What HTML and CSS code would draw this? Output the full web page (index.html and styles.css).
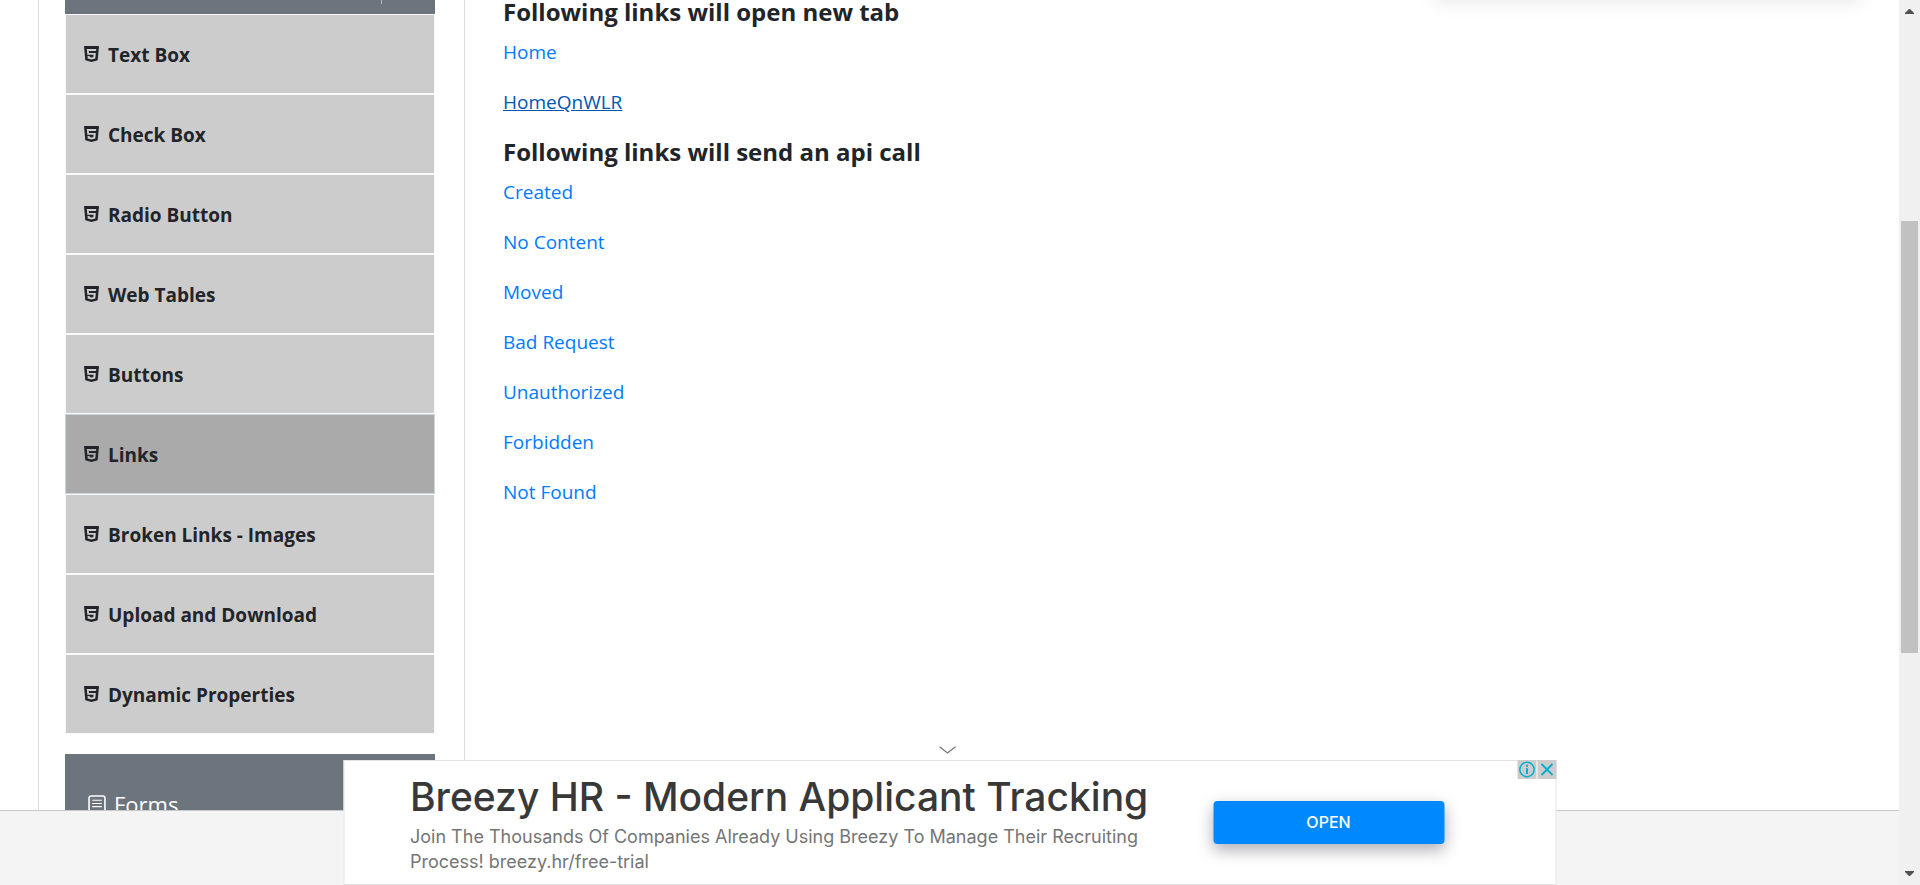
FILE: index.html
```html
<!DOCTYPE html>
<html lang="en">
<head>
<meta charset="utf-8">
<title>Links</title>
<link rel="stylesheet" href="styles.css">
</head>
<body>
<svg class="defs" aria-hidden="true">
  <symbol id="html5" viewBox="0 0 15 16" preserveAspectRatio="none">
    <path fill-rule="evenodd" d="M0 0h15l-1.300 14.200L7.500 16l-6.200-1.800zM12.200 3H2.800l.5 5.700h6.200l-.2 2.300-1.800.5-1.800-.5-.1-1H3.500l.2 2.500 3.800 1.100 3.800-1.100.5-5.600H5l-.2-2h7.200z"/>
  </symbol>
</svg>
<div class="page">
  <main class="layout">
    <nav class="sidebar">
      <div class="group-head group-head-open"><span class="divider"></span></div>
      <ul class="menu">
        <li class="menu-item"><svg class="menu-icon"><use href="#html5"/></svg><span>Text Box</span></li>
        <li class="menu-item"><svg class="menu-icon"><use href="#html5"/></svg><span>Check Box</span></li>
        <li class="menu-item"><svg class="menu-icon"><use href="#html5"/></svg><span>Radio Button</span></li>
        <li class="menu-item"><svg class="menu-icon"><use href="#html5"/></svg><span>Web Tables</span></li>
        <li class="menu-item"><svg class="menu-icon"><use href="#html5"/></svg><span>Buttons</span></li>
        <li class="menu-item active"><svg class="menu-icon"><use href="#html5"/></svg><span>Links</span></li>
        <li class="menu-item"><svg class="menu-icon"><use href="#html5"/></svg><span>Broken Links - Images</span></li>
        <li class="menu-item"><svg class="menu-icon"><use href="#html5"/></svg><span>Upload and Download</span></li>
        <li class="menu-item"><svg class="menu-icon"><use href="#html5"/></svg><span>Dynamic Properties</span></li>
      </ul>
      <div class="group-head group-head-forms">
        <svg class="forms-icon" viewBox="0 0 17 17"><rect x="1" y="1" width="15" height="15" rx="2"/><path d="M4 5h9M4 8h9M4 11h9"/></svg>
        <span>Forms</span>
      </div>
    </nav>
    <section class="content">
      <h5>Following links will open new tab</h5>
      <p><a href="#">Home</a></p>
      <p><a href="#" class="hovered">HomeQnWLR</a></p>
      <h5>Following links will send an api call</h5>
      <p><a href="#">Created</a></p>
      <p><a href="#">No Content</a></p>
      <p><a href="#">Moved</a></p>
      <p><a href="#">Bad Request</a></p>
      <p><a href="#">Unauthorized</a></p>
      <p><a href="#">Forbidden</a></p>
      <p><a href="#">Not Found</a></p>
    </section>
  </main>
  <footer class="footer"></footer>
  <div class="side-card"></div>
  <div class="ad-anchor">
    <button class="ad-collapse" aria-label="Collapse"><svg viewBox="0 0 18 8"><path d="M1 .8l8 6.200 8-6.200"/></svg></button>
    <div class="ad">
      <div class="ad-copy">
        <div class="ad-title">Breezy HR - Modern Applicant Tracking</div>
        <div class="ad-text">Join The Thousands Of Companies Already Using Breezy To Manage Their Recruiting Process! breezy.hr/free-trial</div>
      </div>
      <button class="ad-open">OPEN</button>
      <div class="ad-badges">
        <button aria-label="Ad information"><svg viewBox="0 0 19 19"><circle cx="9.500" cy="9.500" r="7.200" stroke-width="1.500"/><path d="M9.500 8.200v5.800M9.500 4.800v2" stroke-width="2"/></svg></button>
        <button aria-label="Close ad"><svg viewBox="0 0 19 19"><path d="M4 4l11 11M15 4L4 15" stroke-width="1.800"/></svg></button>
      </div>
    </div>
  </div>
</div>
<div class="scrollbar">
  <svg class="arrow" viewBox="0 0 9 5"><path d="M0 5V4L4 0h1l4 4v1z"/></svg>
  <div class="track"><div class="thumb"></div></div>
  <svg class="arrow" viewBox="0 0 9 5"><path d="M0 0v1l4 4h1l4-4V0z"/></svg>
</div>
</body>
</html>
```
FILE: styles.css
```css
* { box-sizing: border-box; }

body {
  margin: 0;
  height: 100vh;
  display: flex;
  overflow: hidden;
  background: #fff;
  color: #212529;
  font: 19px/30px "Open Sans", "Noto Sans", sans-serif;
}

button { border: 0; padding: 0; cursor: pointer; }
.defs { display: none; }

.page {
  position: relative;
  flex: 1;
  min-width: 0;
  display: flex;
  flex-direction: column;
}

.layout {
  flex: 1;
  min-height: 0;
  overflow: hidden;
  display: flex;
  margin-left: 38px;
  border-left: 1px solid #dcdcdc;
}

.sidebar {
  width: 426px;
  flex: none;
  padding: 0 29px 0 26px;
  border-right: 1px solid #dcdcdc;
  height: max-content;
}

.group-head {
  display: flex;
  color: #fff;
  background: #6c757d;
}
.group-head-open { height: 14px; justify-content: flex-end; padding-right: 53px; }
.divider { width: 1px; height: 4px; background: #b5babe; }
.group-head-forms {
  height: 100px;
  align-items: center;
  gap: 8px;
  padding-left: 23px;
  font-size: 22px;
}
.forms-icon { width: 18px; height: 18px; fill: none; stroke: #fff; stroke-width: 1.500; }
.forms-icon path { stroke-width: 1; }

.menu { list-style: none; margin: 0 0 20px; padding: 0; }
.menu-item {
  display: flex;
  align-items: center;
  gap: 9px;
  height: 80px;
  padding-left: 18px;
  border: 1px solid #f8f9fa;
  background: #ccc;
  font-weight: 700;
}
.menu-item span { padding-top: 2px; }
.menu-item.active { background: #aaa; border-color: #ced4da; }
.menu-icon { width: 15px; height: 16px; fill: #212529; }

.content { flex: 1; padding-left: 38px; margin-top: -3px; }
.content h5 { margin: 0 0 10px; font-size: 24px; line-height: 30px; font-weight: 700; }
.content p { margin: 0 0 20px; }
.content a { color: #007bff; text-decoration: none; }
.content a.hovered { color: #0056b3; text-decoration: underline; }

.footer {
  flex: none;
  height: 75px;
  background: #f4f4f4;
  border-top: 1px solid #c8c8c8;
}

.side-card {
  position: absolute;
  top: -20px;
  right: 39px;
  width: 425px;
  height: 16px;
  box-shadow: 0 4px 20px rgba(0, 0, 0, 0.12);
}

.ad-anchor {
  position: absolute;
  bottom: 0;
  left: 50%;
  transform: translateX(-50%);
  width: 1213px;
  max-width: 100%;
  display: flex;
  flex-direction: column;
  align-items: center;
}
.ad-collapse { width: 36px; height: 20px; margin-right: 4px; background: none; display: grid; place-items: center; }
.ad-collapse svg { width: 18px; height: 8px; fill: none; stroke: #777; stroke-width: 1.200; }
.ad {
  position: relative;
  width: 100%;
  height: 125px;
  display: flex;
  align-items: center;
  padding: 0 111px 0 66px;
  border: 1px solid #e3e3e3;
  background: #fff;
}
.ad-copy { flex: 1; min-width: 0; font-family: Inter, sans-serif; }
.ad-title { font-size: 39px; line-height: 50px; font-weight: 500; color: #383838; white-space: nowrap; }
.ad-text { max-width: 770px; margin-top: 2px; font-size: 18px; line-height: 25px; color: #757575; }
.ad-open {
  width: 231px;
  height: 43px;
  border-radius: 4px;
  background: #08f;
  color: #fff;
  font: 500 16px/43px Inter, sans-serif;
  box-shadow: 0 6px 16px rgba(20, 20, 45, 0.35);
}
.ad-badges { position: absolute; top: -1px; right: -1px; display: flex; gap: 1px; }
.ad-badges button { width: 19px; height: 19px; background: #ccc; display: block; }
.ad-badges svg { display: block; width: 19px; height: 19px; fill: none; stroke: #00aecd; }

.scrollbar {
  width: 21px;
  flex: none;
  display: flex;
  flex-direction: column;
  align-items: center;
  padding: 9px 2px;
  background: #f0f0f0;
}
.arrow { width: 9px; height: 5px; fill: #505050; flex: none; }
.track { flex: 1; width: 100%; padding-top: 207px; }
.thumb { height: 432px; background: #c1c1c1; }
```
